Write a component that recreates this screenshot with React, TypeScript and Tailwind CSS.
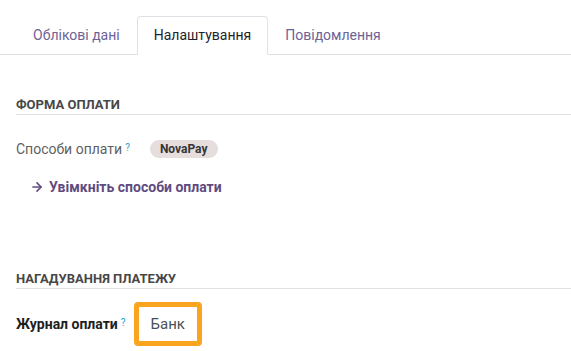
import React from 'react';
import { ArrowRight } from 'lucide-react';

const tabs = ['Облікові дані', 'Налаштування', 'Повідомлення'];

function Help() {
  return <sup className="ml-[3px] text-[10px] font-normal text-[#29a3d1] relative -top-[3px]">?</sup>;
}

function SectionTitle({ children }: { children: React.ReactNode }) {
  return (
    <div className="border-b border-[#e2e2e6] pb-[1px] text-[13px] font-bold uppercase leading-[16px] text-[#474747]">
      {children}
    </div>
  );
}

export default function App() {
  return (
    <div className="h-[351px] w-[571px] overflow-hidden bg-white font-['Roboto',sans-serif] text-[14px]">
      <div className="flex border-b border-[#dee2e6] px-[16px] pt-[16px]">
        {tabs.map((t, i) => (
          <div
            key={t}
            className={
              i === 1
                ? '-mb-px rounded-t-[4px] border border-b-white border-[#dee2e6] bg-white px-[16px] py-[8px] leading-[20px] text-[#1f2329]'
                : 'border border-transparent px-[16px] py-[8px] leading-[20px] text-[#6d6396]'
            }
          >
            {t}
          </div>
        ))}
      </div>

      <div className="pl-[16px]">
        <div className="pt-[42px]">
          <SectionTitle>Форма оплати</SectionTitle>
        </div>

        <div className="mt-[24px] flex items-center">
          <span className="text-[#5f5f5f] leading-[20px]">
            Способи оплати
            <Help />
          </span>
          <span className="ml-[20px] rounded-full bg-[#e6dddd] px-[10px] text-[12px] font-bold leading-[18px] text-[#363636]">
            NovaPay
          </span>
        </div>

        <div className="mt-[18px] flex items-center pl-[14px] font-bold leading-[20px] text-[#5f4b80]">
          <ArrowRight size={14} strokeWidth={2.75} className="mr-[5px]" />
          Увімкніть способи оплати
        </div>

        <div className="pt-[74px]">
          <SectionTitle>Нагадування платежу</SectionTitle>
        </div>

        <div className="mt-[13px] flex items-center">
          <span className="font-bold leading-[20px] text-[#1e1e1e]">
            Журнал оплати
            <Help />
          </span>
          <div className="ml-[8px] rounded-[4px] border-[5px] border-[#fba41f] px-[12px] py-[7px] text-[15px] leading-[20px] text-[#4a5058]">
            Банк
          </div>
        </div>
      </div>
    </div>
  );
}
